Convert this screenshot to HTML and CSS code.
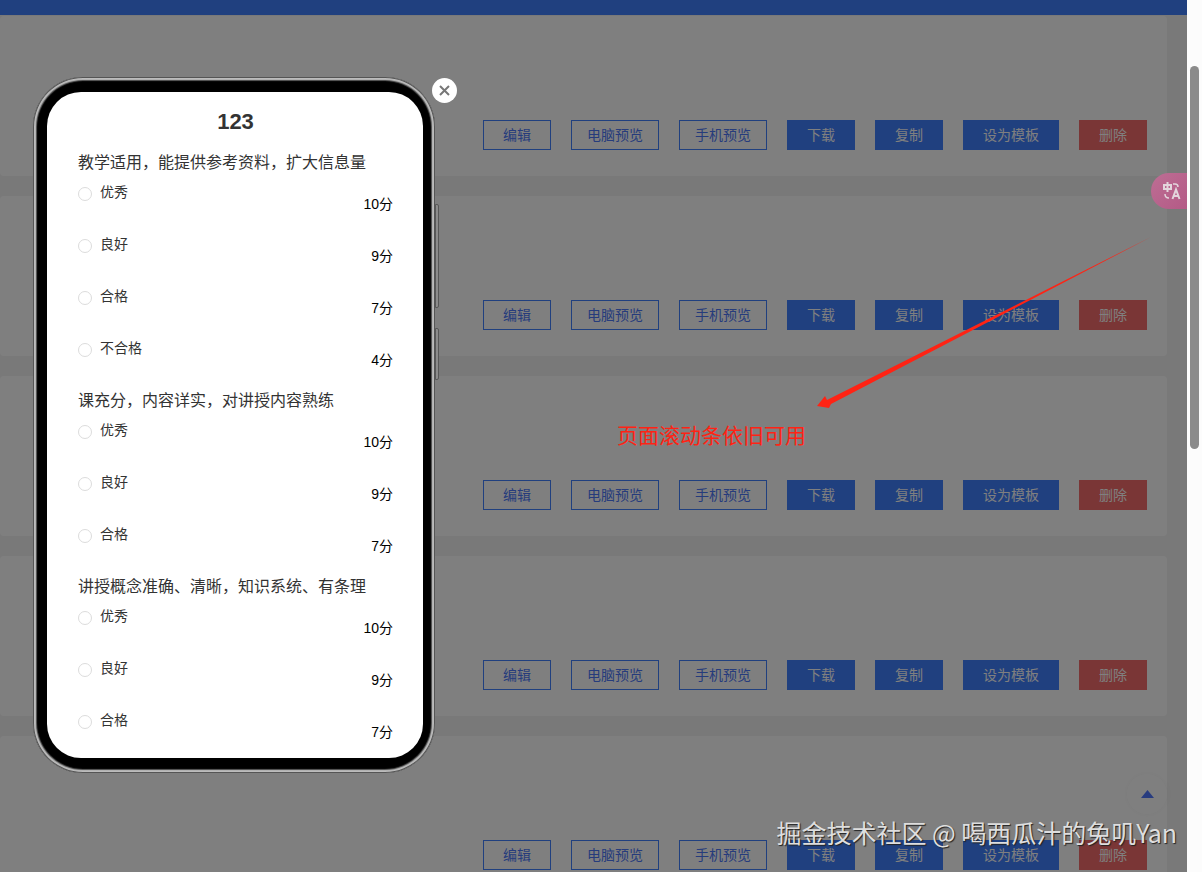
FILE: index.html
```html
<!DOCTYPE html>
<html lang="zh-CN">
<head>
  <meta charset="UTF-8">
  <meta name="viewport" content="width=device-width, initial-scale=1.0">
  <title>问卷管理 - 手机预览</title>
  <link rel="stylesheet" href="styles.css">
</head>
<body>
  <div class="page">
    <header class="topbar"></header>
    <main class="list">
      <section class="card">
        <button class="btn plain">编辑</button>
        <button class="btn plain narrow">电脑预览</button>
        <button class="btn plain narrow">手机预览</button>
        <button class="btn primary">下载</button>
        <button class="btn primary">复制</button>
        <button class="btn primary">设为模板</button>
        <button class="btn danger">删除</button>
      </section>
      <section class="card">
        <button class="btn plain">编辑</button>
        <button class="btn plain narrow">电脑预览</button>
        <button class="btn plain narrow">手机预览</button>
        <button class="btn primary">下载</button>
        <button class="btn primary">复制</button>
        <button class="btn primary">设为模板</button>
        <button class="btn danger">删除</button>
      </section>
      <section class="card">
        <button class="btn plain">编辑</button>
        <button class="btn plain narrow">电脑预览</button>
        <button class="btn plain narrow">手机预览</button>
        <button class="btn primary">下载</button>
        <button class="btn primary">复制</button>
        <button class="btn primary">设为模板</button>
        <button class="btn danger">删除</button>
      </section>
      <section class="card">
        <button class="btn plain">编辑</button>
        <button class="btn plain narrow">电脑预览</button>
        <button class="btn plain narrow">手机预览</button>
        <button class="btn primary">下载</button>
        <button class="btn primary">复制</button>
        <button class="btn primary">设为模板</button>
        <button class="btn danger">删除</button>
      </section>
      <section class="card">
        <button class="btn plain">编辑</button>
        <button class="btn plain narrow">电脑预览</button>
        <button class="btn plain narrow">手机预览</button>
        <button class="btn primary">下载</button>
        <button class="btn primary">复制</button>
        <button class="btn primary">设为模板</button>
        <button class="btn danger">删除</button>
      </section>
    </main>

    <button class="back-top" aria-label="返回顶部">
      <svg width="13" height="8" viewBox="0 0 13 8"><path d="M6.500 0 13 8H0z" fill="#5078ff"/></svg>
    </button>

    <!-- 手机预览弹窗 -->
    <div class="overlay">
      <div class="phone">
        <span class="side-key volume"></span>
        <span class="side-key power"></span>
        <button class="close" aria-label="关闭">
          <svg width="11" height="11" viewBox="0 0 11 11"><path d="M1 1l9 9M10 1l-9 9" stroke="#777" stroke-width="2"/></svg>
        </button>
        <form class="screen">
          <h1>123</h1>
          <fieldset>
            <legend>教学适用，能提供参考资料，扩大信息量</legend>
            <div class="option"><label><input type="radio" name="q1">优秀</label><span class="score">10分</span></div>
            <div class="option"><label><input type="radio" name="q1">良好</label><span class="score">9分</span></div>
            <div class="option"><label><input type="radio" name="q1">合格</label><span class="score">7分</span></div>
            <div class="option"><label><input type="radio" name="q1">不合格</label><span class="score">4分</span></div>
          </fieldset>
          <fieldset>
            <legend>课充分，内容详实，对讲授内容熟练</legend>
            <div class="option"><label><input type="radio" name="q2">优秀</label><span class="score">10分</span></div>
            <div class="option"><label><input type="radio" name="q2">良好</label><span class="score">9分</span></div>
            <div class="option"><label><input type="radio" name="q2">合格</label><span class="score">7分</span></div>
          </fieldset>
          <fieldset>
            <legend>讲授概念准确、清晰，知识系统、有条理</legend>
            <div class="option"><label><input type="radio" name="q3">优秀</label><span class="score">10分</span></div>
            <div class="option"><label><input type="radio" name="q3">良好</label><span class="score">9分</span></div>
            <div class="option"><label><input type="radio" name="q3">合格</label><span class="score">7分</span></div>
          </fieldset>
        </form>
      </div>
    </div>

    <button class="translate" aria-label="翻译">
      <svg width="20" height="20" viewBox="0 0 20 20" fill="none" stroke="#e3d5dc" stroke-width="2">
        <path d="M2 4h7v4H2zM5.500 1v10"/>
        <path d="M11 3h2q3 0 3 3" stroke-width="1.500"/>
        <path d="M3 13q0 4 4 4" stroke-width="1.500"/>
        <path d="M10.500 18 14 8.500 17.500 18M12 15h4"/>
      </svg>
    </button>

    <!-- 标注 -->
    <svg class="arrow" width="334" height="171" viewBox="0 0 334 171">
      <path d="M334 0 14 167 12 171 0 169 8 159 10 163z" fill="#ff2314"/>
    </svg>
    <p class="note">页面滚动条依旧可用</p>
    <p class="watermark">掘金技术社区 @ 喝西瓜汁的兔叽Yan</p>
  </div>

  <div class="scrollbar"><div class="thumb"></div></div>
</body>
</html>
```
FILE: styles.css
```css
* {
  box-sizing: border-box;
}
body {
  margin: 0;
  height: 100vh;
  display: flex;
  overflow: hidden;
  font-family: "Liberation Sans", "Noto Sans CJK SC", sans-serif;
  font-size: 14px;
  color: #333;
}
button {
  font: inherit;
  padding: 0;
  border: none;
  cursor: pointer;
}
.page {
  position: relative;
  flex: 1;
  overflow: hidden;
  background: #f2f2f2;
}
.topbar {
  height: 15px;
  background: #4080ff;
}
.list {
  display: flex;
  flex-direction: column;
  gap: 20px;
  padding: 1px 20px 0 0;
}
.card {
  display: flex;
  justify-content: flex-end;
  align-items: flex-end;
  gap: 20px;
  min-height: 160px;
  padding: 0 20px 26px;
  border-radius: 4px;
  background: #fff;
}
.btn {
  height: 30px;
  padding: 0 20px;
  line-height: 30px;
  color: #fff;
}
.plain {
  padding: 0 19px;
  border: 1px solid #4080ff;
  line-height: 28px;
  background: transparent;
  color: #4c78f8;
}
.narrow {
  padding: 0 15px;
}
.primary {
  background: #4080ff;
}
.danger {
  background: #f56c6c;
}

/* 弹窗 */
.overlay {
  position: absolute;
  inset: 0;
  padding: 77px 33px;
  background: rgba(0, 0, 0, 0.5);
}
.phone {
  position: relative;
  width: 402px;
  padding: 15px 12px 15px 14px;
  border-radius: 50px;
  background: #000;
  box-shadow: inset 0 0 0 1px #555, inset 0 0 1px 3px #bcbcbc, inset 0 0 1px 4px #505050;
}
.screen {
  padding: 15px 30px 0 31px;
  border-radius: 34px;
  background: #fff;
}
.screen h1 {
  margin: 0 0 11px;
  font-size: 22px;
  line-height: 30px;
  text-align: center;
}
fieldset {
  margin: 0;
  padding: 0;
  border: none;
}
legend {
  padding: 0;
  font-size: 16px;
  line-height: 30px;
}
.option {
  display: flex;
  justify-content: space-between;
  height: 52px;
}
.option label {
  display: flex;
  align-items: flex-start;
  gap: 8px;
  line-height: 28px;
}
.option input {
  appearance: none;
  width: 14px;
  height: 14px;
  margin: 9px 0 0;
  border: 1px solid #dcdcdc;
  border-radius: 50%;
}
.score {
  line-height: 52px;
  color: #000;
}
.close {
  position: absolute;
  top: 1px;
  right: -22px;
  width: 25px;
  height: 25px;
  display: flex;
  align-items: center;
  justify-content: center;
  border-radius: 50%;
  background: #fff;
}
.side-key {
  position: absolute;
  right: -4px;
  width: 4px;
  border: 1px solid #585858;
  border-radius: 0 2px 2px 0;
  background: #8c8c8c;
}
.volume {
  top: 127px;
  height: 104px;
}
.power {
  top: 251px;
  height: 52px;
}

/* 悬浮元素 */
.back-top {
  position: absolute;
  right: 20px;
  bottom: 58px;
  width: 40px;
  height: 40px;
  display: flex;
  align-items: center;
  justify-content: center;
  border-radius: 50%;
  background: #fff;
  box-shadow: 0 0 6px rgba(0, 0, 0, 0.04);
}
.translate {
  position: absolute;
  top: 173px;
  right: 0;
  width: 36px;
  height: 36px;
  display: flex;
  align-items: center;
  justify-content: center;
  padding-left: 6px;
  border-radius: 18px 0 0 18px;
  background: linear-gradient(135deg, #bd6e94, #b45a86);
}
.arrow {
  position: absolute;
  top: 237px;
  right: 36px;
}
.note {
  position: absolute;
  top: 421px;
  right: 381px;
  margin: 0;
  font-size: 21px;
  line-height: 30px;
  color: #ff2314;
}
.watermark {
  position: absolute;
  right: 10px;
  bottom: 22px;
  margin: 0;
  font-family: "Noto Sans CJK SC", sans-serif;
  font-size: 25px;
  line-height: 36px;
  color: #dedede;
  text-shadow: 1px 1px 1px #222;
}

.scrollbar {
  width: 15px;
  padding: 66px 3px 0;
  background: #fcfcfc;
}
.thumb {
  height: 383px;
  border-radius: 5px;
  background: #8b8b8b;
}
```
